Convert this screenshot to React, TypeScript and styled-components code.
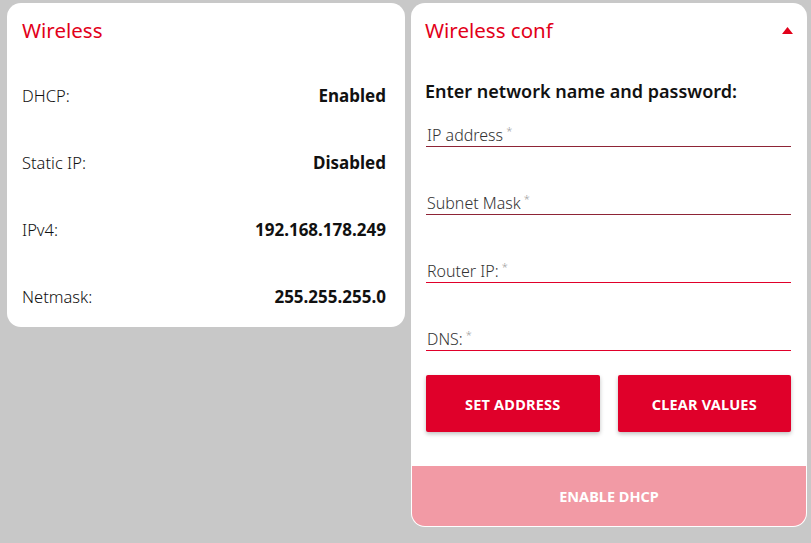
import React from "react";
import styled, { createGlobalStyle } from "styled-components";

const GlobalStyle = createGlobalStyle`
  html, body { margin: 0; padding: 0; background: #c8c8c8; }
  body { font-family: "Noto Sans", "Open Sans", "Liberation Sans", sans-serif; color: #111; }
  * { box-sizing: border-box; }
`;

const Page = styled.div`
  display: flex;
  align-items: flex-start;
  gap: 6px;
  padding: 3px 4px 0 7px;
  min-height: 543px;
  background: #c8c8c8;
`;

const Card = styled.section<{ $width: number }>`
  width: ${(p) => p.$width}px;
  background: #fff;
  border-radius: 14px;
  overflow: hidden;
  display: flex;
  flex-direction: column;
`;

const StatusBody = styled.div`
  padding: 13px 19px 19px 15px;
  display: flex;
  flex-direction: column;
`;

const Title = styled.h2`
  margin: 0;
  font-size: 20.5px;
  line-height: 28px;
  font-weight: 400;
  color: #e2001a;
`;

const StatusList = styled.div`
  margin-top: 39px;
  display: flex;
  flex-direction: column;
  gap: 43px;
`;

const StatusRow = styled.div`
  display: flex;
  justify-content: space-between;
  align-items: center;
  height: 24px;
`;

const StatusLabel = styled.span`
  font-size: 16.5px;
  font-weight: 300;
  color: #111;
`;

const StatusValue = styled.span`
  font-size: 17px;
  font-weight: 700;
  color: #111;
`;

const ConfHeader = styled.div`
  display: flex;
  justify-content: space-between;
  align-items: center;
  padding: 13px 14px 0 14px;
  height: 41px;
`;

const ConfBody = styled.div`
  padding: 0 16px 0 15px;
  display: flex;
  flex-direction: column;
`;

const Instruction = styled.p`
  margin: 35px 0 0 -1px;
  font-size: 18px;
  line-height: 24px;
  font-weight: 600;
  color: #111;
`;

const Fields = styled.div`
  margin-top: 21px;
  display: flex;
  flex-direction: column;
  gap: 45px;
`;

const Field = styled.label<{ $line: string }>`
  display: block;
  height: 23px;
  border-bottom: 1px solid ${(p) => p.$line};
  font-size: 16px;
  line-height: 22px;
  font-weight: 300;
  color: #333;
  padding-left: 1px;
`;

const Req = styled.span`
  font-size: 11px;
  vertical-align: top;
  line-height: 14px;
  color: #999;
  margin-left: 3px;
`;

const Buttons = styled.div`
  margin-top: 24px;
  display: flex;
  gap: 18px;
`;

const Button = styled.button`
  flex: 1;
  height: 57px;
  border: none;
  border-radius: 2px;
  background: #e0002a;
  color: #fff;
  font-family: inherit;
  font-size: 14.5px;
  font-weight: 700;
  text-transform: uppercase;
  letter-spacing: 0.2px;
  box-shadow: 0 2px 4px rgba(0, 0, 0, 0.25);
  cursor: pointer;
`;

const Band = styled.button`
  margin: 34px 1px 1px 1px;
  height: 60px;
  border: none;
  border-radius: 0 0 13px 13px;
  background: #f29aa5;
  color: #fff;
  font-family: inherit;
  font-size: 14.5px;
  font-weight: 700;
  text-transform: uppercase;
`;

const Caret = () => (
  <svg width="11" height="7" viewBox="0 0 11 7">
    <path d="M0 7 L5.5 0 L11 7 Z" fill="#e2001a" />
  </svg>
);

const status = [
  ["DHCP:", "Enabled"],
  ["Static IP:", "Disabled"],
  ["IPv4:", "192.168.178.249"],
  ["Netmask:", "255.255.255.0"],
];

const fields: [string, string][] = [
  ["IP address", "#8e2436"],
  ["Subnet Mask", "#8e2436"],
  ["Router IP:", "#e0002a"],
  ["DNS:", "#e0002a"],
];

export default function App() {
  return (
    <>
      <GlobalStyle />
      <Page>
        <Card $width={398}>
          <StatusBody>
            <Title>Wireless</Title>
            <StatusList>
              {status.map(([l, v]) => (
                <StatusRow key={l}>
                  <StatusLabel>{l}</StatusLabel>
                  <StatusValue>{v}</StatusValue>
                </StatusRow>
              ))}
            </StatusList>
          </StatusBody>
        </Card>
        <Card $width={396}>
          <ConfHeader>
            <Title>Wireless conf</Title>
            <Caret />
          </ConfHeader>
          <ConfBody>
            <Instruction>Enter network name and password:</Instruction>
            <Fields>
              {fields.map(([l, c]) => (
                <Field key={l} $line={c}>
                  {l}
                  <Req>*</Req>
                </Field>
              ))}
            </Fields>
            <Buttons>
              <Button>Set address</Button>
              <Button>Clear values</Button>
            </Buttons>
          </ConfBody>
          <Band>Enable DHCP</Band>
        </Card>
      </Page>
    </>
  );
}
